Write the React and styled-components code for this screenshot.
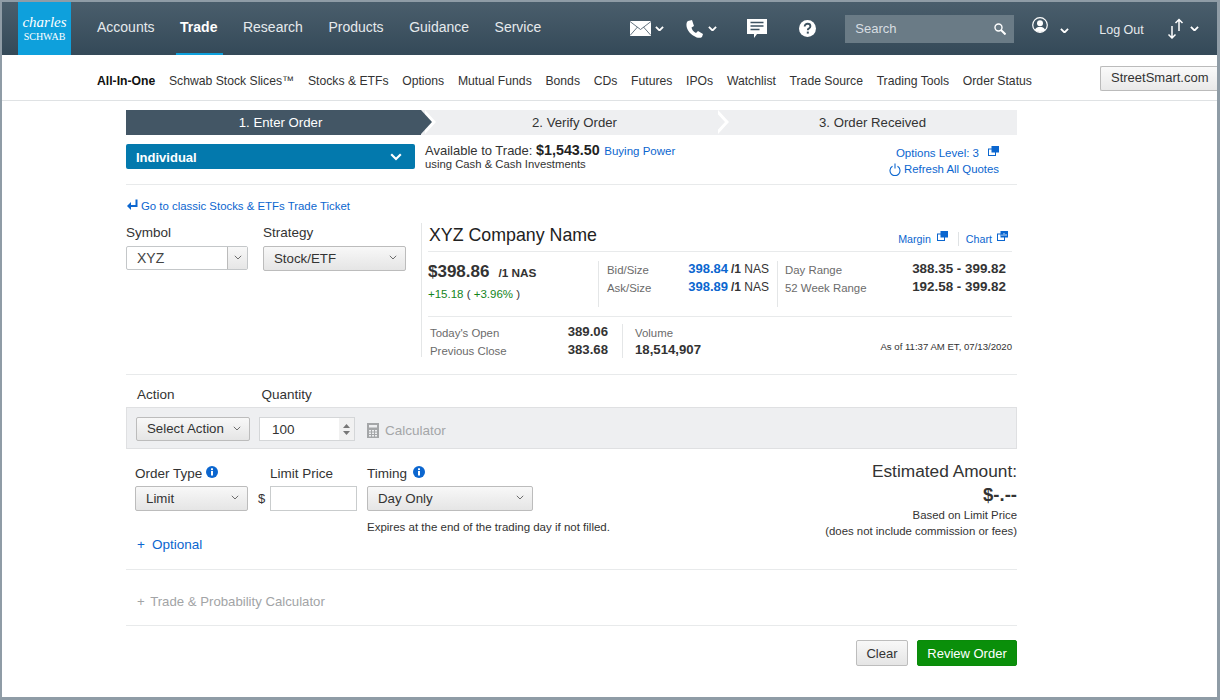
import styled, { createGlobalStyle } from "styled-components"

const Global = createGlobalStyle`
  html, body { margin: 0; padding: 0; background: #fff; }
  body { font-family: "Liberation Sans", Arial, sans-serif; color: #333; }
  * { box-sizing: border-box; }
`
const Frame = styled.div`
  width: 1220px;
  height: 700px;
  border: solid #8f9ca6;
  border-width: 2px 3px 3px 2px;
  overflow: hidden;
  background: #fff;
`
const Header = styled.header`
  height: 53px;
  display: flex;
  align-items: stretch;
  padding-left: 16px;
  background: linear-gradient(#4a5e6c, #344958);
`
const Logo = styled.div`
  width: 53px;
  background: #0ea0dc;
  color: #fff;
  display: flex;
  flex-direction: column;
  align-items: center;
  justify-content: center;
  line-height: 1;
  padding-bottom: 2px;
`
const LogoTop = styled.span`
  font: italic 15px "Liberation Serif", serif;
`
const LogoBottom = styled.span`
  font: 10px "Liberation Serif", serif;
`
const MainNav = styled.nav`
  display: flex;
  margin-left: 26px;
  gap: 25.5px;
`
const MainLink = styled.a`
  position: relative;
  font-size: 14px;
  font-weight: ${p => (p.$active ? 700 : 400)};
  color: ${p => (p.$active ? "#fff" : "#e6eaed")};
  padding-top: 17px;
  &::after {
    content: "";
    display: ${p => (p.$active ? "block" : "none")};
    position: absolute;
    left: -4px;
    right: -6px;
    bottom: 0;
    height: 2px;
    background: #0ea0dc;
  }
`
const Tools = styled.div`
  display: flex;
  align-items: center;
  margin-left: 89px;
  color: #fff;
`
const Tool = styled.div`
  display: flex;
  align-items: center;
  flex: none;
  gap: ${p => p.$gap || 4}px;
  width: ${p => p.$w}px;
`
const Shift = styled.span`
  display: flex;
  margin-top: ${p => p.$by}px;
`
const Search = styled.div`
  width: 169px;
  height: 28px;
  flex: none;
  margin-right: 18px;
  padding: 0 8px 0 10px;
  background: #6a7b86;
  color: #d8dee2;
  font-size: 13px;
  display: flex;
  align-items: center;
  justify-content: space-between;
`
const LogOut = styled.span`
  font-size: 12.5px;
  color: #e6eaed;
  width: 68px;
  flex: none;
  margin-top: 2px;
`
const SubNav = styled.nav`
  height: 46px;
  padding: 6px 0 0 95px;
  display: flex;
  align-items: center;
  gap: 13.7px;
  border-bottom: 1px solid #dfe2e4;
  font-size: 12.2px;
  color: #333;
`
const SubLink = styled.a`
  font-weight: ${p => (p.$active ? 700 : 400)};
  color: ${p => (p.$active ? "#111" : "#333")};
  white-space: nowrap;
`
const StreetSmart = styled.button`
  margin-left: auto;
  margin-top: -4px;
  width: 117px;
  height: 25px;
  flex: none;
  padding: 0 0 2px 10px;
  text-align: left;
  font: 13px "Liberation Sans", sans-serif;
  color: #333;
  border: 1px solid #bbb;
  border-right: 0;
  border-radius: 2px 0 0 2px;
  background: linear-gradient(#fafafa, #e9e9e9);
`
const Main = styled.main`
  width: 891px;
  margin-left: 124px;
  padding-top: 9px;
`
const Steps = styled.div`
  display: grid;
  grid-template-columns: 295px 293px 1fr;
  height: 25px;
  background: #eeeff1;
`
const Step = styled.div`
  position: relative;
  display: flex;
  align-items: center;
  justify-content: center;
  font-size: 13.2px;
  padding: 0 0 1px 14px;
  color: ${p => (p.$active ? "#fff" : "#333")};
  background: ${p => (p.$active ? "#435665" : "transparent")};
  &::before,
  &::after {
    content: "";
    display: ${p => (p.$last ? "none" : "block")};
    position: absolute;
    top: 0;
    border-style: solid;
    border-width: 12.5px 0 12.5px 11px;
  }
  &::before {
    right: -15px;
    z-index: 1;
    border-color: transparent transparent transparent #fff;
  }
  &::after {
    right: -11px;
    z-index: 2;
    border-color: transparent transparent transparent ${p => (p.$active ? "#435665" : "#eeeff1")};
  }
`
const AccountRow = styled.div`
  height: 50px;
  padding-top: 9px;
  display: flex;
  border-bottom: 1px solid #e8eaeb;
`
const Account = styled.div`
  width: 289px;
  height: 25px;
  padding: 1px 13px 0 10px;
  border-radius: 2px;
  background: #0379ad;
  color: #fff;
  font-size: 13px;
  font-weight: 700;
  display: flex;
  align-items: center;
  justify-content: space-between;
`
const Available = styled.div`
  margin-left: 10px;
  margin-top: -1px;
  font-size: 13px;
  line-height: 14px;
`
const AvailableSub = styled.div`
  font-size: 11.3px;
  line-height: 13px;
`
const Strong = styled.b`
  font-size: 14.3px;
  color: #222;
`
const Link = styled.a`
  color: #0b66cf;
  font-size: ${p => p.$size || 11.5}px;
`
const BuyingPower = styled(Link)`
  margin-left: 1px;
`
const AccountLinks = styled.div`
  margin-left: auto;
  padding: 2px 18px 0 0;
  display: flex;
  flex-direction: column;
  align-items: flex-end;
  gap: 2px;
  line-height: 14px;
`
const LinkLine = styled.div`
  display: flex;
  align-items: center;
  gap: ${p => p.$gap || 4}px;
`
const ClassicLink = styled(LinkLine)`
  height: 37px;
  padding-top: 4px;
  gap: 3px;
  margin-left: 1px;
`
const TicketRow = styled.div`
  display: flex;
  height: 152px;
  padding-top: 2px;
`
const PickColumn = styled.div`
  width: 295px;
  display: flex;
  gap: 15px;
  padding-top: 1px;
`
const Field = styled.div`
  display: flex;
  flex-direction: column;
  gap: ${p => p.$gap || 6}px;
`
const Label = styled.label`
  font-size: 13.5px;
  line-height: 15px;
  color: #333;
  display: flex;
  align-items: center;
  gap: ${p => p.$gap || 6}px;
`
const SymbolBox = styled.div`
  width: 122px;
  height: 24px;
  display: flex;
  border: 1px solid #c4c7c9;
  border-radius: 2px;
  font-size: 14px;
  color: #444;
`
const SymbolText = styled.span`
  flex: 1;
  padding: 3px 10px;
`
const SymbolButton = styled.span`
  width: 20px;
  display: flex;
  align-items: center;
  justify-content: center;
  border-left: 1px solid #bbb;
  background: linear-gradient(#f8f8f8, #e6e6e6);
`
const Select = styled.div`
  width: ${p => p.$w}px;
  height: ${p => p.$h || 25}px;
  padding: 0 8px 1px 10px;
  display: flex;
  align-items: center;
  justify-content: space-between;
  font-size: 13.3px;
  color: #333;
  border: 1px solid #bcbcbc;
  border-radius: 2px;
  background: linear-gradient(#f8f8f8, #e5e5e5);
`
const Quote = styled.section`
  flex: 1;
  height: 134px;
  margin-top: -1px;
  padding: 0 5px 0 6px;
  border-left: 1px solid #e4e6e7;
`
const QuoteHead = styled.div`
  height: 29px;
  display: flex;
  align-items: center;
  border-bottom: 1px solid #e8eaeb;
`
const Company = styled.h2`
  margin: 0;
  font-size: 17.8px;
  font-weight: 400;
  color: #222;
  flex: 1;
  padding: 0 0 4px 1px;
`
const QuoteLinks = styled.div`
  display: flex;
  align-items: center;
  gap: 7px;
  padding: 3px 4px 0 0;
  line-height: 14px;
`
const QuoteDivider = styled.span`
  width: 1px;
  height: 14px;
  background: #dfe2e4;
  margin-left: 3px;
`
const QuoteTop = styled.div`
  height: 65px;
  padding-top: 10px;
  display: flex;
  border-bottom: 1px solid #e8eaeb;
`
const PriceCol = styled.div`
  width: 170px;
`
const Price = styled.div`
  font-size: 17px;
  font-weight: 700;
  line-height: 20px;
  color: #333;
  display: flex;
  align-items: baseline;
  gap: 9px;
`
const PriceUnit = styled.span`
  font-size: 11.8px;
`
const Change = styled.div`
  margin-top: 5px;
  font-size: 11.5px;
  color: #14851c;
`
const Paren = styled.span`
  color: #333;
`
const DataCol = styled.div`
  width: ${p => p.$w}px;
  height: 46px;
  margin-top: -1px;
  padding: 0 ${p => p.$pr || 0}px 0 ${p => p.$pl || 8}px;
  border-left: 1px solid #e4e6e7;
`
const DataRow = styled.div`
  height: ${p => p.$h || 18}px;
  display: flex;
  align-items: center;
  justify-content: space-between;
`
const Muted = styled.span`
  font-size: 11.4px;
  color: #6b6b6b;
`
const Value = styled.span`
  font-size: ${p => p.$size || 13.2}px;
  font-weight: 700;
  color: #333;
  margin-top: -3px;
`
const BidValue = styled.span`
  font-size: 12px;
  color: #333;
  white-space: nowrap;
  margin-top: -3px;
  & > b:first-child {
    color: #0b66cf;
    font-size: 13px;
    margin-right: 3px;
  }
`
const QuoteBottom = styled.div`
  display: flex;
  padding-top: 7px;
`
const OpenCol = styled.div`
  width: 181px;
  padding: 0 1px 0 2px;
`
const VolumeCol = styled.div`
  width: 135px;
  height: 34px;
  margin-left: 13px;
  padding-left: 12px;
  border-left: 1px solid #e4e6e7;
`
const AsOf = styled.div`
  flex: 1;
  text-align: right;
  font-size: 9.6px;
  color: #333;
  padding-top: 17px;
`
const Rule = styled.hr`
  margin: 0;
  border: 0;
  border-top: 1px solid #e8eaeb;
`
const ActionLabels = styled.div`
  display: flex;
  height: 32px;
  padding: 6px 0 0 11px;
  gap: 87px;
`
const ActionBar = styled.div`
  height: 42px;
  padding: 2px 9px 0;
  display: flex;
  align-items: center;
  background: #eeeff1;
  border: 1px solid #dfe0e2;
`
const Quantity = styled.div`
  width: 96px;
  height: 24px;
  margin-left: 9px;
  display: flex;
  justify-content: space-between;
  background: #fff;
  border: 1px solid #d4d6d8;
  font-size: 13.5px;
  color: #333;
  padding: 4px 0 0 12px;
`
const Spin = styled.span`
  width: 15px;
  margin-top: -4px;
  background: #f1f1f1;
  display: flex;
  flex-direction: column;
  align-items: center;
  justify-content: center;
  gap: 3px;
`
const Calculator = styled.div`
  margin-left: 12px;
  display: flex;
  align-items: center;
  gap: 6px;
  font-size: 13.5px;
  color: #a4a6a8;
  padding-top: 2px;
`
const OrderRow = styled.div`
  height: 121px;
  display: flex;
  justify-content: space-between;
  padding-top: 17px;
  padding-left: 9px;
  border-bottom: 1px solid #e8eaeb;
`
const OrderFields = styled.div`
  display: flex;
  align-items: flex-start;
`
const Dollar = styled.span`
  font-size: 13px;
  width: 22px;
  padding-left: 10px;
  margin-top: 20px;
  line-height: 25px;
`
const PriceInput = styled.div`
  width: 87px;
  height: 25px;
  background: #fff;
  border: 1px solid #c9cccd;
`
const Hint = styled.div`
  margin-top: 10px;
  font-size: 11.5px;
  color: #333;
  white-space: nowrap;
`
const Optional = styled.div`
  margin-top: 4px;
  padding-left: 2px;
  display: flex;
  gap: 7px;
`
const TimingCol = styled.div`
  margin-left: 10px;
  width: 167px;
`
const Estimate = styled.div`
  margin-top: -7px;
  text-align: right;
  color: #333;
`
const EstimateTitle = styled.div`
  font-size: 17.3px;
  line-height: 24px;
`
const EstimateValue = styled.div`
  font-size: 18.5px;
  font-weight: 700;
  line-height: 24px;
`
const EstimateNote = styled.div`
  font-size: 11.4px;
  line-height: 16px;
`
const Probability = styled.div`
  height: 56px;
  padding: 24px 0 0 11px;
  font-size: 13.2px;
  color: #a2a4a6;
  border-bottom: 1px solid #e8eaeb;
`
const PlusSign = styled.span`
  margin-right: 2px;
`
const Actions = styled.div`
  display: flex;
  justify-content: flex-end;
  gap: 9px;
  padding-top: 14px;
`
const Button = styled.button`
  height: 26px;
  width: ${p => p.$w}px;
  padding: 0;
  font: 13px "Liberation Sans", sans-serif;
  border-radius: 2px;
  color: ${p => (p.$primary ? "#fff" : "#333")};
  border: 1px solid ${p => (p.$primary ? "#0a8a0a" : "#bdbdbd")};
  background: ${p => (p.$primary ? "#0a8f0a" : "linear-gradient(#f8f8f8, #e5e5e5)")};
`

const Chevron = ({ size = 9, width = 2, color = "#fff" }) => (
  <svg width={size} height={size * 0.65} viewBox="0 0 10 6.5" fill="none" stroke={color} strokeWidth={width}>
    <path d="M1 1l4 4 4-4" />
  </svg>
)
const SelectChevron = () => <Chevron size={8} width={1.2} color="#666" />

const PopOut = ({ chart }) => (
  <Shift $by={-5}>
    <svg width="11" height="10" viewBox="0 0 11 10">
      <rect x="0.5" y="3" width="7" height="6.5" fill="#fff" stroke="#0b66cf" />
      <rect x="3.5" y="0" width="7.5" height="6.5" fill="#0b66cf" />
      {chart && <path d="M5 5V3.500M7 5V2M9 5V3" stroke="#fff" strokeWidth="0.8" />}
    </svg>
  </Shift>
)
const Info = () => (
  <Shift $by={-3}>
    <svg width="12" height="12" viewBox="0 0 12 12">
      <circle cx="6" cy="6" r="6" fill="#0b66cf" />
      <rect x="5" y="5" width="2" height="4.5" fill="#fff" />
      <rect x="5" y="2.3" width="2" height="1.8" fill="#fff" />
    </svg>
  </Shift>
)
const Mail = () => (
  <svg width="21" height="15" viewBox="0 0 21 15" fill="#fff" stroke="#3d5261" strokeWidth="0.8">
    <rect width="21" height="15" stroke="none" />
    <path d="M0 0.5l10.5 8 10.5-8M0 14.5l7.5-8.5M21 14.5l-7.5-8.5" fill="none" />
  </svg>
)
const Phone = () => (
  <svg width="18" height="18" viewBox="0 0 18 18" fill="#fff">
    <path d="M3 1L7 0l2 6-2.500 1.500C7 10 8.500 12 11 13l2-2 5 3-1 3c-2 1.500-5 1-8-1C4 13 1 8 1.500 4 1.700 2.500 2 1.500 3 1z" />
  </svg>
)
const Chat = () => (
  <svg width="20" height="20" viewBox="0 0 20 20">
    <path d="M0 0h20v15H10l-3 4v-4H0z" fill="#fff" />
    <path d="M3.500 3.500h13M3.500 7h13M3.500 10.500h9" stroke="#3d5261" strokeWidth="1.300" />
  </svg>
)
const Help = () => (
  <svg width="17" height="17" viewBox="0 0 17 17">
    <circle cx="8.500" cy="8.500" r="8.500" fill="#fff" />
    <path d="M5.700 6.500c0-1.700 1.300-2.700 2.900-2.700s2.800 1 2.800 2.400c0 1.300-.9 1.800-1.700 2.400-.6.400-.9.800-.9 1.600" fill="none" stroke="#3d5261" strokeWidth="1.900" />
    <rect x="7.800" y="11.600" width="2" height="2" fill="#3d5261" />
  </svg>
)
const SearchIcon = () => (
  <svg width="12" height="12" viewBox="0 0 12 12" fill="none" stroke="#fff" strokeWidth="1.400">
    <circle cx="4.500" cy="4.500" r="3.500" />
    <path d="M7 7l4.500 4.500" strokeWidth="2" />
  </svg>
)
const User = () => (
  <Shift $by={-7}>
    <svg width="16" height="16" viewBox="0 0 16 16">
      <circle cx="8" cy="8" r="7.300" fill="none" stroke="#fff" strokeWidth="1.200" />
      <circle cx="8" cy="6.300" r="3" fill="#fff" />
      <path d="M2.800 13c1-2.500 3-3 5.200-3s4.200.5 5.200 3c-1.400 1.300-3.200 2-5.200 2s-3.800-.7-5.200-2z" fill="#fff" />
    </svg>
  </Shift>
)
const Transfer = () => (
  <svg width="18" height="21" viewBox="0 0 18 21" fill="none" stroke="#fff" strokeWidth="1.500">
    <path d="M5 8v12M1.500 16.500L5 20l3.500-3.500M12 13V1.500M8.500 5L12 1.500 15.500 5" />
  </svg>
)
const ReturnArrow = () => (
  <Shift $by={-2}>
    <svg width="11" height="11" viewBox="0 0 11 11" fill="#0b66cf">
      <path d="M8.500 0.500h2v7.500H4v3L0 7l4-4v3h4.500z" />
    </svg>
  </Shift>
)
const Refresh = () => (
  <svg width="12" height="13" viewBox="0 0 12 13" fill="none" stroke="#0b66cf" strokeWidth="1.100">
    <path d="M3.500 3.300a5 5 0 1 0 5 0" />
    <path d="M6 0.500v5" />
  </svg>
)
const CalcIcon = () => (
  <svg width="12" height="15" viewBox="0 0 12 15">
    <rect width="12" height="15" fill="#a4a6a8" />
    <rect x="2" y="2" width="8" height="2.500" fill="#eeeff1" />
    <path d="M2 7h2v1.500H2zM5 7h2v1.500H5zM8 7h2v1.500H8zM2 9.500h2V11H2zM5 9.500h2V11H5zM8 9.500h2V11H8zM2 12h2v1.500H2zM5 12h2v1.500H5zM8 12h2v1.500H8z" fill="#eeeff1" />
  </svg>
)
const SpinArrow = ({ up }) => (
  <svg width="7" height="4" viewBox="0 0 7 4" fill="#777">
    <path d={up ? "M3.500 0L7 4H0z" : "M0 0h7L3.500 4z"} />
  </svg>
)

const mainLinks = ["Accounts", "Trade", "Research", "Products", "Guidance", "Service"]
const subLinks = [
  "All-In-One",
  "Schwab Stock Slices™",
  "Stocks & ETFs",
  "Options",
  "Mutual Funds",
  "Bonds",
  "CDs",
  "Futures",
  "IPOs",
  "Watchlist",
  "Trade Source",
  "Trading Tools",
  "Order Status",
]

const App = () => {
  return (
    <Frame>
      <Global />
      <Header>
        <Logo>
          <LogoTop>charles</LogoTop>
          <LogoBottom>SCHWAB</LogoBottom>
        </Logo>
        <MainNav>
          {mainLinks.map(item => (
            <MainLink key={item} $active={item === "Trade"}>
              {item}
            </MainLink>
          ))}
        </MainNav>
        <Tools>
          <Tool $w={55}>
            <Mail />
            <Chevron />
          </Tool>
          <Tool $w={62} $gap={5}>
            <Phone />
            <Chevron />
          </Tool>
          <Tool $w={52}>
            <Chat />
          </Tool>
          <Tool $w={46}>
            <Help />
          </Tool>
          <Search>
            Search
            <SearchIcon />
          </Search>
          <Tool $w={67} $gap={12}>
            <User />
            <Shift $by={4}>
              <Chevron />
            </Shift>
          </Tool>
          <LogOut>Log Out</LogOut>
          <Tool $w={46} $gap={5}>
            <Transfer />
            <Chevron />
          </Tool>
        </Tools>
      </Header>
      <SubNav>
        {subLinks.map(item => (
          <SubLink key={item} $active={item === "All-In-One"}>
            {item}
          </SubLink>
        ))}
        <StreetSmart>StreetSmart.com</StreetSmart>
      </SubNav>
      <Main>
        <Steps>
          <Step $active>1. Enter Order</Step>
          <Step>2. Verify Order</Step>
          <Step $last>3. Order Received</Step>
        </Steps>
        <AccountRow>
          <Account>
            Individual
            <Chevron size={12} width={1.8} />
          </Account>
          <Available>
            Available to Trade: <Strong>$1,543.50</Strong> <BuyingPower>Buying Power</BuyingPower>
            <AvailableSub>using Cash &amp; Cash Investments</AvailableSub>
          </Available>
          <AccountLinks>
            <LinkLine $gap={9}>
              <Link>Options Level: 3</Link>
              <PopOut />
            </LinkLine>
            <LinkLine $gap={3}>
              <Refresh />
              <Link $size={11.4}>Refresh All Quotes</Link>
            </LinkLine>
          </AccountLinks>
        </AccountRow>
        <ClassicLink>
          <ReturnArrow />
          <Link $size={11.4}>Go to classic Stocks &amp; ETFs Trade Ticket</Link>
        </ClassicLink>
        <TicketRow>
          <PickColumn>
            <Field>
              <Label>Symbol</Label>
              <SymbolBox>
                <SymbolText>XYZ</SymbolText>
                <SymbolButton>
                  <SelectChevron />
                </SymbolButton>
              </SymbolBox>
            </Field>
            <Field>
              <Label>Strategy</Label>
              <Select $w={143}>
                Stock/ETF
                <SelectChevron />
              </Select>
            </Field>
          </PickColumn>
          <Quote>
            <QuoteHead>
              <Company>XYZ Company Name</Company>
              <QuoteLinks>
                <LinkLine $gap={6}>
                  <Link $size={10.7}>Margin</Link>
                  <PopOut />
                </LinkLine>
                <QuoteDivider />
                <LinkLine $gap={5}>
                  <Link $size={10.7}>Chart</Link>
                  <PopOut chart />
                </LinkLine>
              </QuoteLinks>
            </QuoteHead>
            <QuoteTop>
              <PriceCol>
                <Price>
                  $398.86 <PriceUnit>/1 NAS</PriceUnit>
                </Price>
                <Change>
                  +15.18 <Paren>(</Paren> +3.96% <Paren>)</Paren>
                </Change>
              </PriceCol>
              <DataCol $w={179} $pr={8}>
                <DataRow>
                  <Muted>Bid/Size</Muted>
                  <BidValue>
                    <b>398.84</b>
                    <b>/1</b> NAS
                  </BidValue>
                </DataRow>
                <DataRow>
                  <Muted>Ask/Size</Muted>
                  <BidValue>
                    <b>398.89</b>
                    <b>/1</b> NAS
                  </BidValue>
                </DataRow>
              </DataCol>
              <DataCol $w={235} $pr={6} $pl={7}>
                <DataRow>
                  <Muted>Day Range</Muted>
                  <Value $size={13.4}>388.35 - 399.82</Value>
                </DataRow>
                <DataRow>
                  <Muted>52 Week Range</Muted>
                  <Value $size={13.4}>192.58 - 399.82</Value>
                </DataRow>
              </DataCol>
            </QuoteTop>
            <QuoteBottom>
              <OpenCol>
                <DataRow>
                  <Muted>Today's Open</Muted>
                  <Value>389.06</Value>
                </DataRow>
                <DataRow>
                  <Muted>Previous Close</Muted>
                  <Value>383.68</Value>
                </DataRow>
              </OpenCol>
              <VolumeCol>
                <DataRow>
                  <Muted>Volume</Muted>
                </DataRow>
                <DataRow>
                  <Value>18,514,907</Value>
                </DataRow>
              </VolumeCol>
              <AsOf>As of 11:37 AM ET, 07/13/2020</AsOf>
            </QuoteBottom>
          </Quote>
        </TicketRow>
        <Rule />
        <ActionLabels>
          <Label>Action</Label>
          <Label>Quantity</Label>
        </ActionLabels>
        <ActionBar>
          <Select $w={114} $h={24}>
            Select Action
            <SelectChevron />
          </Select>
          <Quantity>
            100
            <Spin>
              <SpinArrow up />
              <SpinArrow />
            </Spin>
          </Quantity>
          <Calculator>
            <CalcIcon />
            Calculator
          </Calculator>
        </ActionBar>
        <OrderRow>
          <div>
            <OrderFields>
              <Field $gap={5}>
                <Label $gap={4}>
                  Order Type <Info />
                </Label>
                <Select $w={113}>
                  Limit
                  <SelectChevron />
                </Select>
              </Field>
              <Dollar>$</Dollar>
              <Field $gap={5}>
                <Label>Limit Price</Label>
                <PriceInput />
              </Field>
              <TimingCol>
                <Field $gap={5}>
                  <Label>
                    Timing <Info />
                  </Label>
                  <Select $w={166}>
                    Day Only
                    <SelectChevron />
                  </Select>
                </Field>
                <Hint>Expires at the end of the trading day if not filled.</Hint>
              </TimingCol>
            </OrderFields>
            <Optional>
              <Link $size={13.5}>+</Link>
              <Link $size={13.5}>Optional</Link>
            </Optional>
          </div>
          <Estimate>
            <EstimateTitle>Estimated Amount:</EstimateTitle>
            <EstimateValue>$-.--</EstimateValue>
            <EstimateNote>Based on Limit Price</EstimateNote>
            <EstimateNote>(does not include commission or fees)</EstimateNote>
          </Estimate>
        </OrderRow>
        <Probability>
          <PlusSign>+</PlusSign> Trade &amp; Probability Calculator
        </Probability>
        <Actions>
          <Button $w={52}>Clear</Button>
          <Button $w={100} $primary>
            Review Order
          </Button>
        </Actions>
      </Main>
    </Frame>
  )
}

export default App
